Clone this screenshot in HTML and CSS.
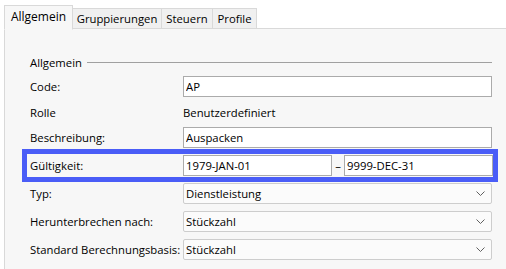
FILE: index.html
```html
<!DOCTYPE html>
<html lang="de">
<head>
	<meta charset="UTF-8">
	<title>Allgemein</title>
	<link rel="stylesheet" href="styles.css">
</head>
<body>
	<!-- Tab strip -->
	<div class="tabs">
		<div class="tab tab-general active">Allgemein</div>
		<div class="tab tab-groups">Gruppierungen</div>
		<div class="tab tab-control">Steuern</div>
		<div class="tab tab-profile">Profile</div>
	</div>

	<!-- Tab page -->
	<div class="panel">
		<div class="group-head">
			<span class="group-title">Allgemein</span>
			<span class="group-line"></span>
		</div>

		<div class="row">
			<label class="label">Code:</label>
			<div class="field"><input class="input" type="text" value="AP"></div>
		</div>
		<div class="row row-text">
			<label class="label">Rolle</label>
			<div class="field value">Benutzerdefiniert</div>
		</div>
		<div class="row">
			<label class="label">Beschreibung:</label>
			<div class="field"><input class="input" type="text" value="Auspacken"></div>
		</div>
		<div class="row row-highlight">
			<label class="label">Gültigkeit:</label>
			<div class="field range">
				<input class="input" type="text" value="1979-JAN-01">
				<span class="dash">–</span>
				<input class="input" type="text" value="9999-DEC-31">
			</div>
		</div>
		<div class="row">
			<label class="label">Typ:</label>
			<div class="field">
				<div class="select">
					<span>Dienstleistung</span>
					<svg class="chevron" width="9" height="5" viewBox="0 0 9 5"><path d="M0.5 0.5 L4.5 4.5 L8.5 0.5" fill="none" stroke="#606060" stroke-width="1"/></svg>
				</div>
			</div>
		</div>
		<div class="row">
			<label class="label">Herunterbrechen nach:</label>
			<div class="field">
				<div class="select">
					<span>Stückzahl</span>
					<svg class="chevron" width="9" height="5" viewBox="0 0 9 5"><path d="M0.5 0.5 L4.5 4.5 L8.5 0.5" fill="none" stroke="#606060" stroke-width="1"/></svg>
				</div>
			</div>
		</div>
		<div class="row">
			<label class="label">Standard Berechnungsbasis:</label>
			<div class="field">
				<div class="select">
					<span>Stückzahl</span>
					<svg class="chevron" width="9" height="5" viewBox="0 0 9 5"><path d="M0.5 0.5 L4.5 4.5 L8.5 0.5" fill="none" stroke="#606060" stroke-width="1"/></svg>
				</div>
			</div>
		</div>
	</div>
</body>
</html>
```

FILE: styles.css
```css
* {
	margin: 0;
	padding: 0;
	box-sizing: border-box;
}

/* Page */
body {
	font-family: 'Open Sans', 'Noto Sans', sans-serif;
	font-size: 11.3px;
	color: #000;
	background: #FFF;
	overflow: hidden;
}

/* Tab strip */
.tabs {
	display: flex;
	align-items: flex-end;
	height: 29px;
	padding: 0 0 0 4px;
	position: relative;
	z-index: 1;
}

.tab {
	height: 21px;
	line-height: 19px;
	text-align: center;
	background-color: #F0F0F0;
	border: 1px solid #D9D9D9;
	border-left: none;
	white-space: nowrap;
}

.tab.active {
	height: 25px;
	line-height: 22px;
	background-color: #F7F7F7;
	border-left: 1px solid #D9D9D9;
	border-bottom: 1px solid #F7F7F7;
	margin-bottom: -1px;
	font-size: 12px;
}

.tab-general { width: 69px; }
.tab-groups { width: 89px; }
.tab-control { width: 51px; }
.tab-profile { width: 44px; }

/* Tab page */
.panel {
	margin: -1px 0 0 4px;
	height: 242px;
	background-color: #F7F7F7;
	border: 1px solid #D9D9D9;
	border-right: none;
	border-bottom: none;
	padding: 25px 14px 0 23px;
	width: 520px;
}

.group-head {
	display: flex;
	align-items: center;
	height: 16px;
	width: 464px;
	margin-bottom: 6px;
}

.group-title {
	padding: 0 5px 0 2px;
}

.group-line {
	flex: 1;
	height: 1px;
	background-color: #A0A0A0;
}

/* Form rows */
.row {
	display: flex;
	align-items: center;
	width: 464px;
	height: 21px;
	margin-bottom: 7px;
}

.row-text {
	height: 16px;
}

.row-highlight {
	outline: 5px solid #4A5DF7;
	outline-offset: 1px;
}

.label {
	flex: 0 0 155px;
	padding-left: 2px;
	white-space: nowrap;
}

.field {
	flex: 1;
	height: 100%;
	display: flex;
	align-items: center;
}

.input {
	width: 100%;
	height: 21px;
	border: 1px solid #ABABAB;
	background-color: #FFF;
	padding: 0 2px;
	font: inherit;
	color: #000;
	outline: none;
}

.range .input {
	flex: 1;
	width: auto;
	min-width: 0;
}

.dash {
	flex: 0 0 12px;
	text-align: center;
}

.select {
	width: 100%;
	height: 21px;
	display: flex;
	align-items: center;
	justify-content: space-between;
	border: 1px solid #CDCDCD;
	border-radius: 2px;
	background-color: #FBFBFB;
	padding: 0 6px 0 2px;
}

.chevron {
	display: block;
}
```
